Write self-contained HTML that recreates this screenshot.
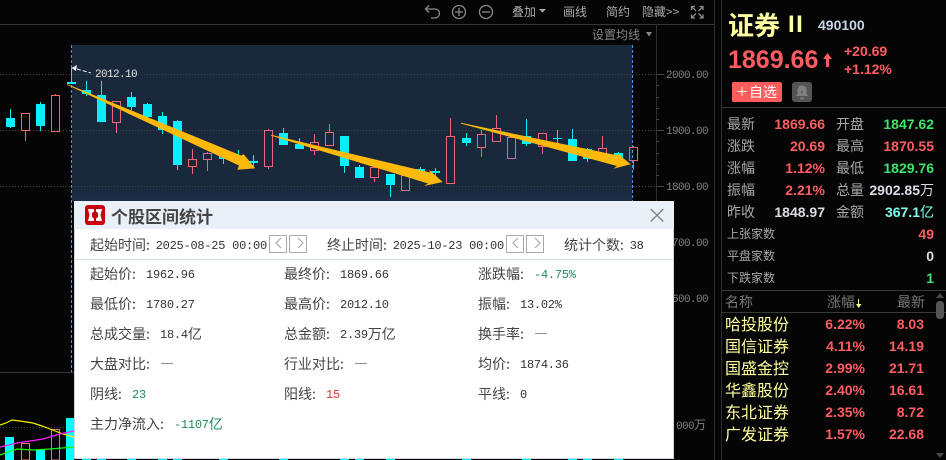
<!DOCTYPE html>
<html lang="zh-CN">
<head>
<meta charset="utf-8">
<style>
html,body{margin:0;padding:0;width:946px;height:460px;overflow:hidden;background:#050505}
body{position:relative;font-family:"Liberation Sans","WenQuanYi Zen Hei","Noto Sans CJK SC",sans-serif}
svg{position:absolute;left:0;top:0}
.t{position:absolute;white-space:nowrap;line-height:16px;height:16px}
.c{font-family:"WenQuanYi Zen Hei","Noto Sans CJK SC",sans-serif;font-size:14px}
.s{font-family:"WenQuanYi Zen Hei","Noto Sans CJK SC",sans-serif;font-size:12px}
.ax{font-family:"Liberation Mono",monospace;font-size:11px;letter-spacing:-.6px;color:#808080}
.tb{color:#a8a8a8}
.lb{color:#a8a8a8}
.v{font-family:"Liberation Sans","WenQuanYi Zen Hei",sans-serif;font-size:14px;font-weight:bold;text-align:right;width:80px}
.r{color:#ff5c62}.g{color:#3fe46e}.w{color:#dcdce6}.cy{color:#7ffff0}
.nm{font-family:"WenQuanYi Zen Hei","Noto Sans CJK SC",sans-serif;font-size:16px;color:#ffffa0;left:725px}
.p{left:785px}.q{left:844px}
#dlg{position:absolute;left:74px;top:201px;width:600px;height:258px;background:#fff;box-shadow:0 0 0 1px #cfd8e6 inset;overflow:hidden}
#dlg .t{color:#444}
#dlg .n{font-family:"Liberation Mono",monospace;font-size:12px;letter-spacing:-.25px;color:#333;position:relative;top:-1px}
#dlg .gn,#dlg .gn .n{color:#1e8a5a}
#dlg .rd,#dlg .rd .n{color:#d9352c}
.k{display:inline-block;width:14px;padding-left:0}
.j{display:inline-block;width:9.7px}
.hd{position:absolute;left:0;top:0;width:600px;height:28px;background:#eaf0f8}
.ln{position:absolute;left:0;top:58px;width:600px;height:1px;background:#d5dde8}
.bt{position:absolute;top:34px;width:16px;height:16px;border:1px solid #aaa;background:#fff}
</style>
</head>
<body>
<svg width="946" height="460" viewBox="0 0 946 460">
  <defs><linearGradient id="pg" x1="0" y1="0" x2="0" y2="1"><stop offset="0" stop-color="#19293b"/><stop offset=".9" stop-color="#19293b"/><stop offset="1" stop-color="#1d2e47"/></linearGradient></defs>
  <rect x="72" y="45" width="560" height="156" fill="url(#pg)"/>
  <g shape-rendering="crispEdges">
    <path d="M0 24.5H714M0 372.5H74" stroke="#363636" fill="none"/>
    <path d="M714.5 0V460M721.5 0V460M656.5 24V201" stroke="#2e2e2e" fill="none"/>
    <path d="M721 107.5H946M721 290.5H946M721 312.5H946" stroke="#383838" fill="none"/>
    <path d="M0 74.5H664M0 130.5H664M0 186.5H664M0 427.5H74" stroke="#3c4650" stroke-dasharray="1 2" fill="none"/>
    <path d="M656 74.5h8M656 85.5h3M656 97.5h3M656 108.5h3M656 119.5h3M656 130.5h8M656 141.5h3M656 153.5h3M656 164.5h3M656 175.5h3M656 186.5h8" stroke="#444" fill="none"/>
    <path d="M71.5 45V372M632.5 45V201" stroke="#4a96f0" stroke-dasharray="3 2" fill="none"/>
    <!-- left red candles -->
    <path d="M21.5 113.5h8v17h-8zM25.5 131V141M51.5 95.5h8v36h-8zM55.5 94V95" fill="none" stroke="#ff6464"/>
    <!-- panel red candles -->
    <path d="M112.5 101.5h8v21h-8zM116.5 123V133M188.5 159.5h8v7h-8zM192.5 149V159M192.5 167V174M203.5 153.5h8v6h-8zM207.5 152V153M207.5 160V171M264.5 130.5h8v36h-8zM268.5 129V130M268.5 167V169M310.5 142.5h8v8h-8zM314.5 134V142M314.5 151V155M325.5 132.5h8v13h-8zM329.5 124V132M370.5 167.5h8v10h-8zM374.5 178V182M401.5 175.5h8v15h-8zM446.5 136.5h8v47h-8zM450.5 118V136M477.5 134.5h8v13h-8zM481.5 130V134M481.5 148V157M492.5 128.5h8v13h-8zM496.5 115V128M507.5 137.5h8v21h-8zM538.5 133.5h8v13h-8zM542.5 147V154M598.5 148.5h8v9h-8zM602.5 136V148M629.5 147.5h8v13h-8zM633.5 146V147M633.5 161V170" fill="none" stroke="#ee6478"/>
    <!-- cyan candles -->
    <path fill="#08f0ff" d="M6 118h9v9H6zM10 109h1v19h-1zM36 104h9v22h-9zM40 102h1v29h-1zM67 82h9v2h-9zM71 68h1v16h-1zM82 90h9v4h-9zM86 81h1v15h-1zM97 95h9v27h-9zM101 81h1v14h-1zM127 97h9v10h-9zM131 92h1v18h-1zM143 104h9v13h-9zM147 103h1v1h-1zM158 116h9v14h-9zM162 112h1v22h-1zM173 121h9v44h-9zM177 120h1v50h-1zM219 153h9v6h-9zM223 150h1v14h-1zM234 156h9v2h-9zM238 150h1v13h-1zM249 161h9v2h-9zM253 155h1v12h-1zM279 133h9v12h-9zM283 128h1v5h-1zM295 144h9v5h-9zM299 138h1v6h-1zM340 136h9v30h-9zM344 166h1v7h-1zM355 167h9v11h-9zM359 165h1v2h-1zM386 174h9v11h-9zM390 185h1v12h-1zM416 169h9v2h-9zM420 167h1v8h-1zM431 171h9v2h-9zM435 168h1v12h-1zM462 138h9v5h-9zM466 133h1v13h-1zM522 136h9v8h-9zM526 119h1v27h-1zM553 138h9v1h-9zM557 130h1v13h-1zM568 139h9v22h-9zM572 129h1v10h-1zM583 149h9v10h-9zM587 148h1v14h-1zM614 153h9v7h-9zM618 152h1v1h-1z"/>
    <!-- volume -->
    <path fill="#00ffff" d="M5 437h9v23H5zM36 450h9v10h-9zM66 418h8v42h-8z"/>
    <path fill="none" stroke="#ff6e6e" d="M21.5 443.5h8V460h-8zM51.5 429.5h8V460h-8z"/>
  </g>
  <!-- indicator lines -->
  <polyline points="0,425 6,423 12,420 20,421 33,423 42,426 50,429 63,434 74,437" fill="none" stroke="#f0f000" stroke-width="1.2"/>
  <polyline points="0,447 17,443 43,439 60,434 74,431" fill="none" stroke="#ff20ff" stroke-width="1.2"/>
  <polyline points="0,455 17,449 33,450 50,449 74,447" fill="none" stroke="#10ff10" stroke-width="1.2"/>
  <!-- arrows -->
  <g fill="#ffb90a">
    <polygon points="67,84 241,155.5 243.7,154.3 255.3,168.3 237.3,169.7 239,165.5 67,84.8"/>
    <polygon points="271,134.8 430,172.5 429.3,170 442.7,182 424,186 428,183.5 271,135.6"/>
    <polygon points="461,122.8 617,155.3 616.7,152.7 630.7,164.3 613.3,168.7 617,166 461,123.6"/>
  </g>
  <!-- max label leader -->
  <path d="M77 69L91 73" stroke="#eee" stroke-dasharray="4 2" fill="none"/>
  <path d="M71.500 68L77 65L76 71Z" fill="#e8f4ff"/>
  <!-- toolbar icons -->
  <g fill="none" stroke="#8a8a8a" stroke-width="1.3">
    <path d="M426 9h9a4.5 4.5 0 0 1 0 9h-4M429 5.5L425.5 9L429 12.5"/>
    <circle cx="459" cy="12" r="6.5"/><path d="M455 12h8M459 8v8"/>
    <circle cx="486" cy="12" r="6.5"/><path d="M482 12h8"/>
    <path d="M691.5 10V6.5H695M699.5 6.5H703V10M703 14.500V18H699.500M695 18H691.5V14.500M692 7L696 11M702.500 7L698.500 11M692 17.500L696 13.500M702.500 17.500L698.500 13.500"/>
  </g>
  <path d="M539 9h7l-3.500 3.500z" fill="#aaa"/>
  <path d="M646 32h6l-3 4.500z" fill="#8a8a92"/>
  <!-- right panel scrollbar -->
  <path d="M936 298l4-5 4 5zM936 453l4 5 4-5z" fill="#4a4a4a"/>
  <rect x="936" y="301" width="8" height="18" rx="3.500" fill="#555"/>
  <path d="M858.500 299v7" stroke="#ffffa0" stroke-width="1"/><path d="M856 304h5.500l-2.750 4z" fill="#ffffa0"/>
  <!-- up arrow by price -->
  <path d="M827.500 53l4.500 6h-3v8h-3v-8h-3z" fill="#ff5c62"/>
  <!-- button + bell -->
  <rect x="732" y="82" width="50" height="20" rx="2" fill="#ff5c5c"/>
  <path d="M737.500 91.500h9M742 87v9" stroke="#fff" stroke-width="1" fill="none"/>
  <rect x="792" y="82" width="20" height="20" rx="3" fill="#555"/>
  <path d="M802 85.500c-3 0-4.500 2.300-4.500 5v3.500l-1.500 2h12l-1.500-2v-3.500c0-2.700-1.500-5-4.500-5z" fill="#808080"/><path d="M800 97.500h4v1.500h-4z" fill="#808080"/><path d="M802.500 89l-2 3.500h1.500l-.5 2.500 2-3.500h-1.500z" fill="#555"/>
  <!-- chart bottom sliver -->
  <path d="M82 459h9v1h-9zM97 459h9v1h-9zM127 459h9v1h-9zM158 459h9v1h-9zM173 459h9v1h-9zM219 459h9v1h-9zM279 459h9v1h-9zM340 459h9v1h-9zM355 459h9v1h-9zM386 459h9v1h-9zM462 459h9v1h-9zM522 459h9v1h-9zM568 459h9v1h-9zM583 459h9v1h-9zM614 459h9v1h-9z" fill="#08f0ff"/>
</svg>

<!-- toolbar -->
<div class="t s tb" style="left:512px;top:4px">叠加</div>
<div class="t s tb" style="left:563px;top:4px">画线</div>
<div class="t s tb" style="left:606px;top:4px">简约</div>
<div class="t s tb" style="left:642px;top:4px">隐藏&gt;&gt;</div>
<div class="t s" style="left:592px;top:27px;color:#858585">设置均线</div>

<!-- axis -->
<div class="t ax" style="left:666px;top:68px">2000.00</div>
<div class="t ax" style="left:666px;top:124px">1900.00</div>
<div class="t ax" style="left:666px;top:180px">1800.00</div>
<div class="t ax" style="left:666px;top:236px">1700.00</div>
<div class="t ax" style="left:666px;top:292px">1600.00</div>
<div class="t ax" style="left:676px;top:417px">000<span class="s">万</span></div>
<div class="t ax" style="left:95px;top:67px;color:#e4e4e4">2012.10</div>

<!-- title block -->
<div class="t" style="left:728px;top:9px;height:32px;line-height:32px;font-size:26px;font-weight:bold;color:#ffffa0;font-family:'Noto Sans CJK SC',sans-serif">证券</div>
<div class="t" style="left:788px;top:9px;height:32px;line-height:32px;font-size:24px;font-weight:bold;color:#ffffa0;letter-spacing:1.5px">II</div>
<div class="t" style="left:818px;top:17px;font-size:14px;font-weight:bold;color:#c6d2e8">490100</div>
<div class="t r" style="left:728px;top:45px;height:30px;line-height:30px;font-size:25px;font-weight:bold">1869.66</div>
<div class="t r" style="left:844px;top:43px;font-size:14px;font-weight:bold">+20.69</div>
<div class="t r" style="left:844px;top:61px;font-size:14px;font-weight:bold">+1.12%</div>
<div class="t" style="left:749px;top:83px;height:18px;line-height:18px;color:#fff;font-size:14px;font-family:'WenQuanYi Zen Hei','Noto Sans CJK SC',sans-serif">自选</div>

<!-- quote table -->
<div class="t c lb" style="left:727px;top:116px">最新</div><div class="t v r" style="left:745px;top:116px">1869.66</div>
<div class="t c lb" style="left:836px;top:116px">开盘</div><div class="t v g" style="left:854px;top:116px">1847.62</div>
<div class="t c lb" style="left:727px;top:138px">涨跌</div><div class="t v r" style="left:745px;top:138px">20.69</div>
<div class="t c lb" style="left:836px;top:138px">最高</div><div class="t v r" style="left:854px;top:138px">1870.55</div>
<div class="t c lb" style="left:727px;top:160px">涨幅</div><div class="t v r" style="left:745px;top:160px">1.12%</div>
<div class="t c lb" style="left:836px;top:160px">最低</div><div class="t v g" style="left:854px;top:160px">1829.76</div>
<div class="t c lb" style="left:727px;top:182px">振幅</div><div class="t v r" style="left:745px;top:182px">2.21%</div>
<div class="t c lb" style="left:836px;top:182px">总量</div><div class="t v w" style="left:854px;top:182px">2902.85<span style="font-weight:normal;font-family:'WenQuanYi Zen Hei',sans-serif">万</span></div>
<div class="t c lb" style="left:727px;top:204px">昨收</div><div class="t v w" style="left:745px;top:204px">1848.97</div>
<div class="t c lb" style="left:836px;top:204px">金额</div><div class="t v cy" style="left:854px;top:204px">367.1<span style="font-weight:normal;font-family:'WenQuanYi Zen Hei',sans-serif">亿</span></div>

<div class="t s lb" style="left:727px;top:226px">上张家数</div><div class="t v r" style="left:854px;top:226px">49</div>
<div class="t s lb" style="left:727px;top:248px">平盘家数</div><div class="t v w" style="left:854px;top:248px">0</div>
<div class="t s lb" style="left:727px;top:270px">下跌家数</div><div class="t v g" style="left:854px;top:270px">1</div>

<!-- list -->
<div class="t c" style="left:725px;top:294px;color:#777">名称</div>
<div class="t c" style="left:827px;top:294px;color:#777">涨幅</div>
<div class="t c" style="left:897px;top:294px;color:#777">最新</div>

<div class="t nm" style="top:315px">哈投股份</div><div class="t v r p" style="top:316px">6.22%</div><div class="t v r q" style="top:316px">8.03</div>
<div class="t nm" style="top:337px">国信证券</div><div class="t v r p" style="top:338px">4.11%</div><div class="t v r q" style="top:338px">14.19</div>
<div class="t nm" style="top:359px">国盛金控</div><div class="t v r p" style="top:360px">2.99%</div><div class="t v r q" style="top:360px">21.71</div>
<div class="t nm" style="top:381px">华鑫股份</div><div class="t v r p" style="top:382px">2.40%</div><div class="t v r q" style="top:382px">16.61</div>
<div class="t nm" style="top:403px">东北证券</div><div class="t v r p" style="top:404px">2.35%</div><div class="t v r q" style="top:404px">8.72</div>
<div class="t nm" style="top:425px">广发证券</div><div class="t v r p" style="top:426px">1.57%</div><div class="t v r q" style="top:426px">22.68</div>

<!-- dialog -->
<div id="dlg">
  <div class="hd"></div>
  <div class="ln"></div>
  <svg width="600" height="60" viewBox="0 0 600 60">
    <rect x="11" y="4" width="20" height="20" rx="3" fill="#c8000c"/>
    <path d="M14 8h6v2.500l-2 1.500v4l2 1.500V20h-6l1.500-6z" fill="#fff"/>
    <path d="M28 8h-6v2.500l2 1.500v4l-2 1.500V20h6l-1.500-6z" fill="#fff"/>
    <path d="M576.700 8l12.600 12.600M589.300 8l-12.600 12.600" stroke="#808080" stroke-width="1.3" fill="none"/>
  </svg>
  <div class="t" style="left:37px;top:5px;height:20px;line-height:20px;font-size:17px;font-weight:bold;font-family:'Noto Sans CJK SC',sans-serif">个股区间统计</div>

  <div class="t c" style="left:16px;top:36px">起始时间<span class="j">:</span><span class="n">2025-08-25 00:00</span></div>
  <div class="bt" style="left:195px"></div><div class="bt" style="left:215px"></div>
  <div class="t c" style="left:253px;top:36px">终止时间<span class="j">:</span><span class="n">2025-10-23 00:00</span></div>
  <div class="bt" style="left:432px"></div><div class="bt" style="left:452px"></div>
  <svg width="600" height="60" viewBox="0 0 600 60" style="pointer-events:none">
    <path d="M207 37l-5 5 5 5M224 37l5 5-5 5M444 37l-5 5 5 5M461 37l5 5-5 5" fill="none" stroke="#aaa" stroke-width="1.200"/>
  </svg>
  <div class="t c" style="left:490px;top:36px">统计个数<span class="j">:</span><span class="n">38</span></div>

  <div class="t c" style="left:16px;top:65px">起始价<span class="k">:</span><span class="n">1962.96</span></div>
  <div class="t c" style="left:210px;top:65px">最终价<span class="k">:</span><span class="n">1869.66</span></div>
  <div class="t c" style="left:404px;top:65px">涨跌幅<span class="k">:</span><span class="gn"><span class="n">-4.75%</span></span></div>

  <div class="t c" style="left:16px;top:95px">最低价<span class="k">:</span><span class="n">1780.27</span></div>
  <div class="t c" style="left:210px;top:95px">最高价<span class="k">:</span><span class="n">2012.10</span></div>
  <div class="t c" style="left:404px;top:95px">振幅<span class="k">:</span><span class="n">13.02%</span></div>

  <div class="t c" style="left:16px;top:125px">总成交量<span class="k">:</span><span class="n">18.4</span>亿</div>
  <div class="t c" style="left:210px;top:125px">总金额<span class="k">:</span><span class="n">2.39</span>万亿</div>
  <div class="t c" style="left:404px;top:125px">换手率<span class="k">:</span>—</div>

  <div class="t c" style="left:16px;top:155px">大盘对比<span class="k">:</span>—</div>
  <div class="t c" style="left:210px;top:155px">行业对比<span class="k">:</span>—</div>
  <div class="t c" style="left:404px;top:155px">均价<span class="k">:</span><span class="n">1874.36</span></div>

  <div class="t c" style="left:16px;top:185px">阴线<span class="k">:</span><span class="gn"><span class="n">23</span></span></div>
  <div class="t c" style="left:210px;top:185px">阳线<span class="k">:</span><span class="rd"><span class="n">15</span></span></div>
  <div class="t c" style="left:404px;top:185px">平线<span class="k">:</span><span class="n">0</span></div>

  <div class="t c" style="left:16px;top:215px">主力净流入<span class="k">:</span><span class="gn"><span class="n">-1107</span>亿</span></div>
</div>
</body>
</html>
